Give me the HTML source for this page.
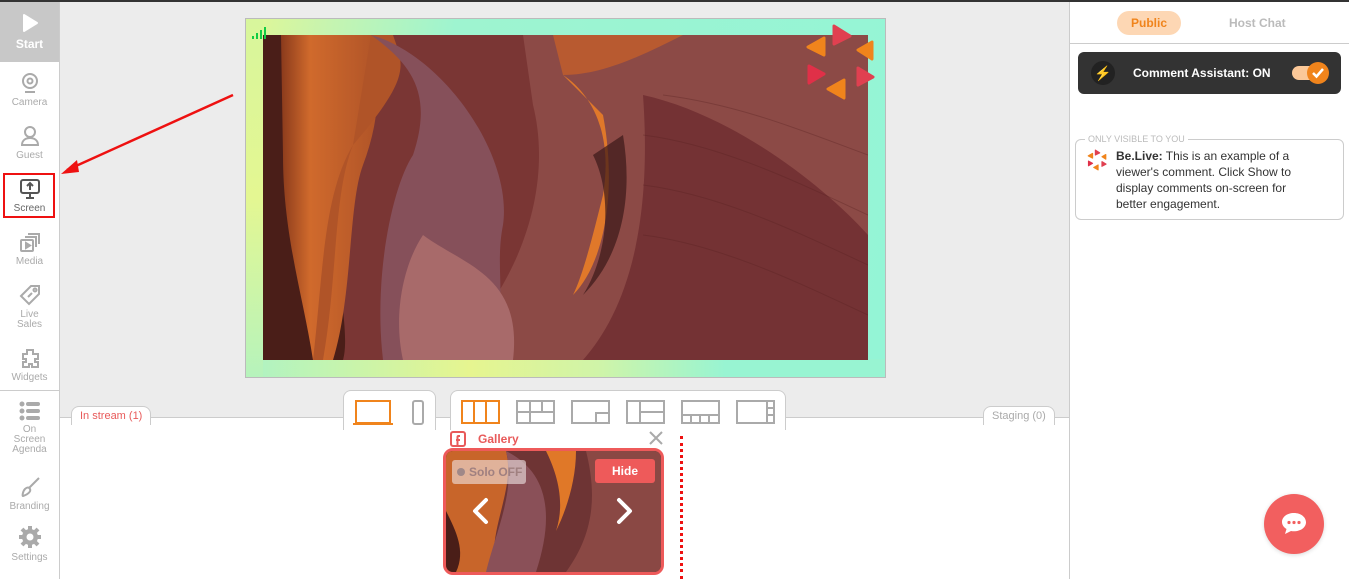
<!DOCTYPE html>
<html><head><meta charset="utf-8"><style>
*{box-sizing:border-box;margin:0;padding:0}
body{width:1349px;height:579px;overflow:hidden;position:relative;font-family:"Liberation Sans",sans-serif;background:#fff}
.abs{position:absolute}
.side{left:0;top:2px;width:60px;height:577px;background:#fff;border-right:1px solid #ccc}
.it{position:absolute;left:0;width:59px;text-align:center;color:#aaa;font-size:10px;line-height:10px}
.it svg{display:block;margin:0 auto 4px}
</style></head><body>
<div class="abs" style="left:0;top:0;width:1349px;height:2px;background:#333"></div>
<div class="abs" style="left:60px;top:2px;width:1009px;height:415px;background:#ececec"></div>
<div class="abs" style="left:60px;top:417px;width:1009px;height:162px;background:#fff;border-top:1px solid #ccc"></div>
<div class="abs" style="left:1069px;top:2px;width:280px;height:577px;background:#fff;border-left:1px solid #ccc"></div>

<div class="abs side">
 <div class="abs" style="left:0;top:0;width:59px;height:60px;background:#c8c8c8;color:#fff;text-align:center;font-weight:bold;font-size:12px">
  <svg width="20" height="20" viewBox="0 0 20 20" style="display:block;margin:11px auto 4px"><path d="M4 2 L17 10 L4 18Z" fill="#fff" stroke="#fff" stroke-linejoin="round" stroke-width="2"/></svg>Start</div>
 <div class="it" style="top:70px"><svg width="22" height="22" viewBox="0 0 22 22" fill="none" stroke="#aaa" stroke-width="2"><circle cx="11" cy="9" r="7"/><circle cx="11" cy="9" r="2.5"/><path d="M6 20h10"/></svg>Camera</div>
 <div class="it" style="top:123px"><svg width="22" height="22" viewBox="0 0 22 22" fill="none" stroke="#aaa" stroke-width="2"><circle cx="11" cy="7" r="5"/><path d="M3 20c0-5 4-7 8-7s8 2 8 7z"/></svg>Guest</div>
 <div class="abs" style="left:3px;top:171px;width:52px;height:45px;border:2px solid #e11"></div>
 <div class="it" style="top:176px;color:#666"><svg width="22" height="22" viewBox="0 0 22 22" fill="none" stroke="#555" stroke-width="2"><rect x="2" y="2" width="18" height="13" rx="2"/><path d="M11 12V6M8 8l3-3 3 3M11 15v4M7 20h8"/></svg>Screen</div>
 <div class="it" style="top:229px"><svg width="22" height="22" viewBox="0 0 22 22" fill="none" stroke="#aaa" stroke-width="2"><rect x="2" y="9" width="12" height="11" rx="1"/><path d="M6 6h11v10M9 3h11v10"/><path d="M7 12l4 2.5-4 2.5z" fill="#aaa"/></svg>Media</div>
 <div class="it" style="top:282px"><svg width="22" height="22" viewBox="0 0 22 22" fill="none" stroke="#aaa" stroke-width="2"><path d="M2 12L12 2h8v8L10 20z"/><circle cx="16" cy="6" r="1.5"/><path d="M9 13l4-4"/></svg>Live<br>Sales</div>
 <div class="it" style="top:345px"><svg width="22" height="22" viewBox="0 0 22 22" fill="none" stroke="#aaa" stroke-width="2"><path d="M8 3h6v4h5v5h-3v3h3v5h-6v-3h-3v3H4v-5h3v-3H4V7h4z"/></svg>Widgets</div>
 <div class="abs" style="left:0;top:388px;width:59px;border-top:1px solid #ccc"></div>
 <div class="it" style="top:399px"><svg width="22" height="20" viewBox="0 0 22 20" fill="#aaa"><circle cx="3" cy="3" r="2.5"/><circle cx="3" cy="10" r="2.5"/><circle cx="3" cy="17" r="2.5"/><rect x="7" y="1" width="14" height="4" rx="2"/><rect x="7" y="8" width="14" height="4" rx="2"/><rect x="7" y="15" width="14" height="4" rx="2"/></svg>On<br>Screen<br>Agenda</div>
 <div class="it" style="top:474px"><svg width="22" height="22" viewBox="0 0 22 22" fill="none" stroke="#aaa" stroke-width="2"><path d="M20 2L10 12M4 20c-1 0 0-5 2-7s4-2 5 0-1 5-7 7z"/></svg>Branding</div>
 <div class="it" style="top:523px"><svg width="24" height="24" viewBox="0 0 24 24"><circle cx="12" cy="12" r="8" fill="#aaa"/><g stroke="#aaa" stroke-width="4"><path d="M12 1v22M1 12h22M4 4l16 16M20 4L4 20"/></g><circle cx="12" cy="12" r="3.5" fill="#fff"/></svg>Settings</div>
</div>

<svg class="abs" style="left:55px;top:90px" width="185" height="90"><path d="M178 5 L12 80" stroke="#e11" stroke-width="2.5"/><path d="M6 84 L22 70 L24 82Z" fill="#e11"/></svg>

<!-- canvas -->
<div class="abs" style="left:245px;top:18px;width:641px;height:360px;border:1px solid #bbb;background:linear-gradient(100deg,#e2f794 0%,#c6f4b0 12%,#9ef4d0 30%,#94f5d6 100%)"></div>
<div class="abs" style="left:246px;top:359px;width:639px;height:18px;background:linear-gradient(90deg,#aef3c4,#e6f590 35%,#d0f4a8 55%,#98f4d2 75%)"></div>
<div class="abs" style="left:246px;top:19px;width:17px;height:358px;background:linear-gradient(180deg,#d8f69c,#e4f792 50%,#b6f3bc)"></div>
<svg class="abs" style="left:263px;top:35px" width="605" height="325" viewBox="0 0 605 325">
<defs><linearGradient id="o" x1="0" x2="1"><stop offset="0" stop-color="#8a3a1c"/><stop offset=".3" stop-color="#d06a2c"/><stop offset="1" stop-color="#b05428"/></linearGradient></defs>
<rect width="605" height="325" fill="#7a3634"/>
<path d="M260 0H605V325H180C260 250 290 150 270 70Z" fill="#8c4a46"/>
<path d="M380 60C470 80 560 150 605 200V325H320C360 280 390 200 380 60Z" fill="#743234"/>
<path d="M0 0H110C120 80 100 120 80 130 60 200 90 290 80 325H0Z" fill="#4a1e18"/>
<path d="M18 0H108C120 50 115 90 100 130 85 170 90 260 70 325H50C40 260 20 200 20 120Z" fill="url(#o)"/>
<path d="M108 0H130C140 30 150 40 90 110 70 160 75 240 60 325H50C60 240 60 160 90 110Z" fill="#b05428"/>
<path d="M108 0C180 20 250 120 240 190 230 240 250 280 220 325H120C110 240 130 150 150 120 170 60 150 30 108 0Z" fill="#86505a"/>
<path d="M160 200C200 230 260 240 250 325H140C130 280 140 230 160 200Z" fill="#a86a6a"/>
<path d="M300 40C330 60 350 100 340 160 330 200 320 240 310 260 340 230 355 160 340 80Z" fill="#e0782a"/>
<path d="M290 0H420C380 20 340 40 300 40Z" fill="#b85a30"/>
<path d="M330 120C350 160 345 220 320 260 360 220 370 160 360 100Z" fill="#3a1818" opacity=".7"/>
<g stroke="#5a2222" stroke-width="1" opacity=".35" fill="none"><path d="M380 100C460 110 540 150 605 180M380 150C460 160 540 200 605 230M380 200C460 210 540 250 605 280M400 60C480 70 550 100 605 120"/></g>
</svg>
<svg class="abs" style="left:252px;top:26px" width="20" height="14" fill="#1c4"><rect x="0" y="10" width="2" height="3"/><rect x="4" y="7" width="2" height="6"/><rect x="8" y="4" width="2" height="9"/><rect x="12" y="1" width="2" height="12"/></svg>
<svg class="abs" style="left:802px;top:22px" width="76" height="80" viewBox="0 0 76 80"><g stroke-linejoin="round" stroke-width="3"><path d="M32 4L48 14 32 22Z" fill="#e04050" stroke="#e04050"/><path d="M22 16L6 25 22 33Z" fill="#f0841c" stroke="#f0841c"/><path d="M70 20L56 28 70 37Z" fill="#f0841c" stroke="#f0841c"/><path d="M7 44L22 52 7 61Z" fill="#e03048" stroke="#e03048"/><path d="M56 46L71 55 56 63Z" fill="#e04050" stroke="#e04050"/><path d="M42 58L26 67 42 76Z" fill="#f0841c" stroke="#f0841c"/></g></svg>

<div class="abs" style="left:343px;top:390px;width:93px;height:40px;background:#fff;border:1px solid #ccc;border-bottom:none;border-radius:8px 8px 0 0"></div>
<div class="abs" style="left:450px;top:390px;width:336px;height:40px;background:#fff;border:1px solid #ccc;border-bottom:none;border-radius:8px 8px 0 0"></div>
<svg class="abs" style="left:350px;top:400px" width="430" height="26" fill="none" stroke-width="2">
<g stroke="#f0841c"><rect x="6" y="1" width="34" height="22"/><path d="M3 24h40"/><rect x="112" y="1" width="37" height="22"/><path d="M124 1v22M136 1v22"/></g>
<g stroke="#aaa"><rect x="63" y="1" width="10" height="23" rx="2"/>
<rect x="167" y="1" width="37" height="22"/><path d="M167 12h37M180 1v11M192 1v11M180 12v11"/>
<rect x="222" y="1" width="37" height="22"/><rect x="246" y="13" width="13" height="10"/>
<rect x="277" y="1" width="37" height="22"/><path d="M290 1v22M290 12h24"/>
<rect x="332" y="1" width="37" height="22"/><path d="M332 15h37M341 15v8M350 15v8M359 15v8"/>
<rect x="387" y="1" width="37" height="22"/><path d="M417 1v22M417 8h7M417 15h7"/></g></svg>
<div class="abs" style="left:71px;top:406px;padding:3px 8px;border:1px solid #ccc;border-bottom:none;border-radius:8px 8px 0 0;background:#fff;color:#e85a5a;font-size:11px">In stream (1)</div>
<div class="abs" style="left:983px;top:406px;padding:3px 8px;border:1px solid #ccc;border-bottom:none;border-radius:8px 8px 0 0;background:#fff;color:#aaa;font-size:11px">Staging (0)</div>

<svg class="abs" style="left:450px;top:431px" width="16" height="16"><rect x="1" y="1" width="14" height="14" rx="2" fill="none" stroke="#e85a5a" stroke-width="2"/><path d="M10 5H8.5Q7.5 5 7.5 6V15M6 9h4" stroke="#e85a5a" stroke-width="2" fill="none"/></svg>
<div class="abs" style="left:478px;top:432px;color:#e85a5a;font-weight:bold;font-size:12px">Gallery</div>
<svg class="abs" style="left:649px;top:431px" width="14" height="14"><path d="M1 1L13 13M13 1L1 13" stroke="#aaa" stroke-width="2"/></svg>
<div class="abs" style="left:443px;top:448px;width:221px;height:127px;border:3px solid #ee5a5a;border-radius:10px;overflow:hidden;background:#7a3a34">
<svg width="215" height="121" viewBox="0 0 215 121" style="display:block"><rect width="215" height="121" fill="#6e3434"/><path d="M0 0H60C70 40 40 80 50 121H0Z" fill="#c8652a"/><path d="M60 0C100 20 110 60 90 121H40C50 80 70 40 60 0Z" fill="#8a5058"/><path d="M100 0H130C130 30 120 60 110 80 120 50 110 20 100 0Z" fill="#e07828"/><path d="M0 60C10 80 20 100 10 121H0Z" fill="#4a1e18"/><path d="M140 0H215V121H120C150 80 150 40 140 0Z" fill="#8a4844"/></svg>
</div>
<div class="abs" style="left:452px;top:460px;width:74px;height:24px;background:rgba(240,230,230,.6);border-radius:3px;color:#a08080;font-weight:bold;font-size:12px;line-height:24px;padding-left:17px">Solo OFF</div>
<div class="abs" style="left:457px;top:468px;width:8px;height:8px;border-radius:50%;background:#a08888"></div>
<div class="abs" style="left:595px;top:459px;width:60px;height:24px;background:#ee5a5a;border-radius:3px;color:#fff;font-weight:bold;font-size:12px;line-height:24px;text-align:center">Hide</div>
<svg class="abs" style="left:470px;top:497px" width="170" height="30" fill="none" stroke="#fff" stroke-width="4" stroke-linecap="round" stroke-linejoin="round"><path d="M16 3L5 14 16 25M149 3L160 14 149 25"/></svg>
<div class="abs" style="left:680px;top:436px;height:143px;border-left:3px dotted #e11"></div>

<div class="abs" style="left:1117px;top:11px;width:64px;height:24px;border-radius:12px;background:#fdd7b4;color:#f0841c;font-weight:bold;font-size:12px;line-height:24px;text-align:center">Public</div>
<div class="abs" style="left:1229px;top:16px;color:#bbb;font-weight:bold;font-size:12px">Host Chat</div>
<div class="abs" style="left:1070px;top:43px;width:279px;border-top:1px solid #ccc"></div>
<div class="abs" style="left:1078px;top:52px;width:263px;height:42px;background:#333;border-radius:6px"></div>
<div class="abs" style="left:1091px;top:61px;width:24px;height:24px;border-radius:50%;background:#222;color:#f0a020;text-align:center;line-height:24px;font-size:14px">⚡</div>
<div class="abs" style="left:1133px;top:66px;color:#fff;font-weight:bold;font-size:12px">Comment Assistant: ON</div>
<div class="abs" style="left:1292px;top:66px;width:34px;height:14px;border-radius:7px;background:#fbc898"></div>
<div class="abs" style="left:1307px;top:62px;width:22px;height:22px;border-radius:50%;background:#f0841c"></div>
<svg class="abs" style="left:1311px;top:66px" width="14" height="14"><path d="M2 7l3.5 3.5L12 3" stroke="#fff" stroke-width="2.5" fill="none"/></svg>
<div class="abs" style="left:1075px;top:139px;width:269px;height:81px;border:1px solid #ccc;border-radius:6px"></div>
<div class="abs" style="left:1085px;top:134px;background:#fff;padding:0 3px;color:#bbb;font-size:9px">ONLY VISIBLE TO YOU</div>
<svg class="abs" style="left:1086px;top:149px" width="22" height="22" viewBox="0 0 76 80"><g stroke-linejoin="round" stroke-width="4"><path d="M32 4L48 14 32 22Z" fill="#e04050" stroke="#e04050"/><path d="M22 16L6 25 22 33Z" fill="#f0841c" stroke="#f0841c"/><path d="M70 20L56 28 70 37Z" fill="#f0841c" stroke="#f0841c"/><path d="M7 44L22 52 7 61Z" fill="#e03048" stroke="#e03048"/><path d="M56 46L71 55 56 63Z" fill="#e04050" stroke="#e04050"/><path d="M42 58L26 67 42 76Z" fill="#f0841c" stroke="#f0841c"/></g></svg>
<div class="abs" style="left:1116px;top:148px;width:196px;color:#333;font-size:12px;line-height:16px"><b>Be.Live:</b> This is an example of a viewer's comment. Click Show to display comments on-screen for better engagement.</div>
<div class="abs" style="left:1264px;top:494px;width:60px;height:60px;border-radius:50%;background:#f25f5f;box-shadow:0 1px 4px rgba(0,0,0,.15)"></div>
<svg class="abs" style="left:1279px;top:509px" width="30" height="30" viewBox="0 0 30 30"><path d="M15 4C8 4 3 8 3 13c0 3 2 5.5 4.5 7L6 25l6-3c1 .2 2 .3 3 .3 7 0 12-4 12-9S22 4 15 4z" fill="#fff"/><circle cx="10" cy="13.5" r="1.6" fill="#f25f5f"/><circle cx="15" cy="13.5" r="1.6" fill="#f25f5f"/><circle cx="20" cy="13.5" r="1.6" fill="#f25f5f"/></svg>
</body></html>
